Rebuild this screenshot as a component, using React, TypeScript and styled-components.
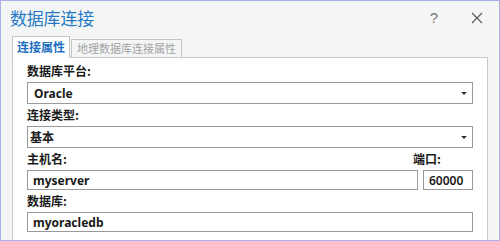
import styled, { createGlobalStyle } from "styled-components";

const GlobalStyle = createGlobalStyle`
  html, body {
    margin: 0;
    padding: 0;
    background: #f4f6f6;
  }
  * {
    box-sizing: border-box;
  }
`;

const Window = styled.div`
  width: 500px;
  height: 241px;
  border: 1px solid #a9b0ea;
  background: #f4f6f6;
  display: flex;
  flex-direction: column;
  overflow: hidden;
  font-family: "Noto Sans", "Noto Sans CJK SC", sans-serif;
  color: #1a1a1a;
`;

const TitleBar = styled.div`
  height: 35px;
  display: flex;
  align-items: center;
  padding: 0 16px 2px 9px;
`;

const Title = styled.div`
  flex: 1;
  font-family: "Noto Sans CJK SC", sans-serif;
  font-size: 17px;
  color: #2579c6;
  letter-spacing: -0.2px;
`;

const TitleButton = styled.button<{ $gap: number }>`
  border: none;
  background: none;
  padding: 0;
  margin-left: ${(p) => p.$gap}px;
  color: #7a7a7a;
  font-family: "Liberation Sans", sans-serif;
  font-size: 15px;
  line-height: 16px;
  display: flex;
  align-items: center;
`;

const TabRow = styled.div`
  display: flex;
  align-items: flex-end;
  height: 21px;
  padding-left: 11px;
  position: relative;
  z-index: 1;
`;

const Tab = styled.div<{ $active?: boolean }>`
  font-family: "Noto Sans CJK SC", sans-serif;
  font-size: ${(p) => (p.$active ? 12 : 11)}px;
  border: 1px solid #c4c4c4;
  border-bottom: none;
  padding: 0 ${(p) => (p.$active ? 4 : 5)}px;
  margin-left: ${(p) => (p.$active ? 0 : 1)}px;
  height: ${(p) => (p.$active ? 22 : 18)}px;
  line-height: ${(p) => (p.$active ? 19 : 17)}px;
  margin-bottom: ${(p) => (p.$active ? -1 : 0)}px;
  background: ${(p) => (p.$active ? "#ffffff" : "#f4f6f6")};
  color: ${(p) => (p.$active ? "#1d6fbf" : "#a3a3a3")};
  font-weight: ${(p) => (p.$active ? 700 : 400)};
`;

const Panel = styled.div`
  flex: 1;
  margin: 0 11px;
  background: #ffffff;
  border: 1px solid #c9c9c9;
  border-bottom: none;
  padding: 2px 14px 0 14px;
  display: flex;
  flex-direction: column;
`;

const Label = styled.div`
  font-family: "Noto Sans CJK SC", sans-serif;
  font-weight: 700;
  font-size: 12px;
  height: 22px;
  line-height: 22px;
  white-space: nowrap;
`;

const PortLabel = styled(Label)`
  margin-left: -10px;
`;

const Select = styled.div<{ $inset?: number }>`
  height: 22px;
  border: 1px solid #9a9a9a;
  display: flex;
  align-items: center;
  padding: 0 5px 0 ${(p) => p.$inset ?? 2}px;
  font-family: "Noto Sans", "Noto Sans CJK SC", sans-serif;
  font-weight: 700;
  font-size: 12px;
`;

const SelectValue = styled.span`
  flex: 1;
`;

const Caret = styled.span`
  width: 0;
  height: 0;
  border-left: 3px solid transparent;
  border-right: 3px solid transparent;
  border-top: 3px solid #333;
  margin-top: 1px;
`;

const Input = styled.div<{ $weight?: number }>`
  height: 20px;
  border: 1px solid #9a9a9a;
  display: flex;
  align-items: center;
  padding: 0 5px;
  font-family: "Noto Sans", "Noto Sans CJK SC", sans-serif;
  font-weight: ${(p) => p.$weight ?? 700};
  font-size: 12px;
`;

const HostGrid = styled.div`
  display: grid;
  grid-template-columns: 1fr 50px;
  column-gap: 5px;
`;

function App() {
  return (
    <>
      <GlobalStyle />
      <Window>
        <TitleBar>
          <Title>数据库连接</Title>
          <TitleButton $gap={0}>?</TitleButton>
          <TitleButton $gap={33}>
            <svg width="12" height="12" viewBox="0 0 12 12">
              <path d="M1 1 L11 11 M11 1 L1 11" stroke="#555" strokeWidth="1.1" fill="none" />
            </svg>
          </TitleButton>
        </TitleBar>
        <TabRow>
          <Tab $active>连接属性</Tab>
          <Tab>地理数据库连接属性</Tab>
        </TabRow>
        <Panel>
          <Label>数据库平台:</Label>
          <Select $inset={6}>
            <SelectValue>Oracle</SelectValue>
            <Caret />
          </Select>
          <Label>连接类型:</Label>
          <Select>
            <SelectValue>基本</SelectValue>
            <Caret />
          </Select>
          <HostGrid>
            <Label>主机名:</Label>
            <PortLabel>端口:</PortLabel>
            <Input>myserver</Input>
            <Input $weight={600}>60000</Input>
          </HostGrid>
          <Label>数据库:</Label>
          <Input>myoracledb</Input>
        </Panel>
      </Window>
    </>
  );
}

export default App;
